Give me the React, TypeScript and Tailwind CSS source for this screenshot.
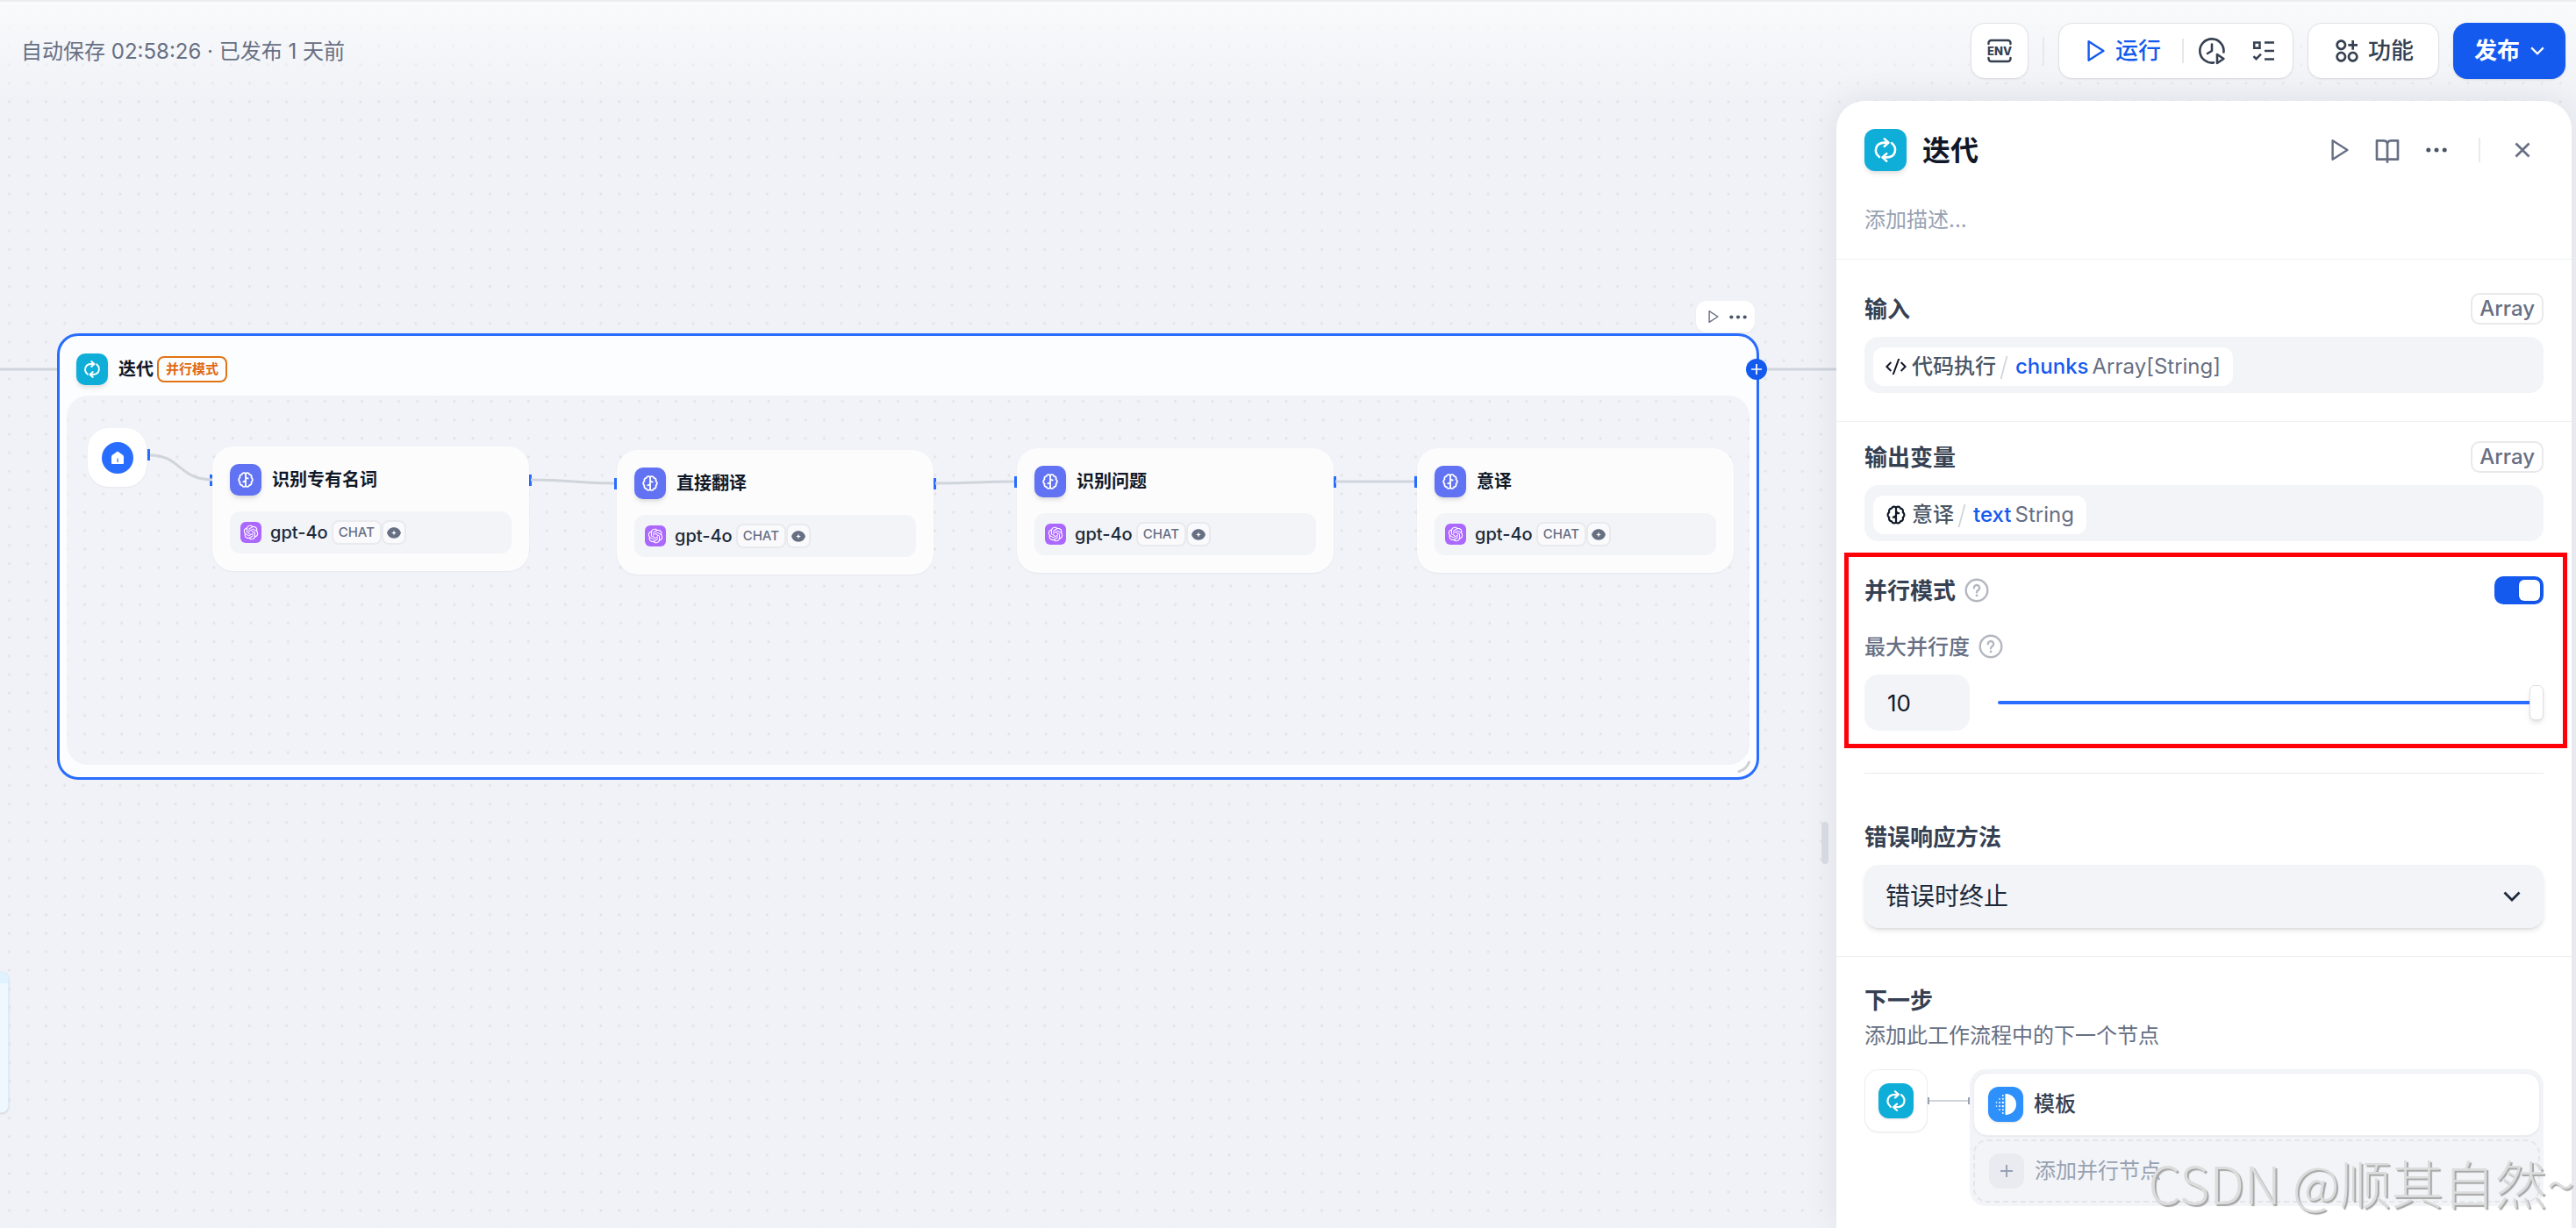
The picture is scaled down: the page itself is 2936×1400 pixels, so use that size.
import { useState } from 'react';
import type { ReactNode } from 'react';
import { RiApps2AddLine, RiBookOpenLine, RiCloseLine, RiCodeSSlashLine, RiOpenaiFill } from 'react-icons/ri';

interface IconProps {
  className?: string;
}

interface LlmNodeData {
  title: string;
  x: number;
  y: number;
}

const llmNodes: LlmNodeData[] = [
  { title: '识别专有名词', x: 242, y: 509 },
  { title: '直接翻译', x: 703, y: 513 },
  { title: '识别问题', x: 1159, y: 511 },
  { title: '意译', x: 1615, y: 511 },
];

const NODE_WIDTH = 361;
const HANDLE_Y = 38;

const PlayIcon = ({ className }: IconProps) => (
  <svg viewBox="0 0 20 24" fill="none" stroke="currentColor" strokeWidth="2.4" className={className}>
    <path d="M1.6 1.2 18.4 12 1.6 22.8Z" strokeLinejoin="round" />
  </svg>
);

const MoreIcon = ({ className }: IconProps) => (
  <svg viewBox="0 0 24 6" fill="currentColor" className={className}>
    <circle cx="2.8" cy="3" r="2.5" />
    <circle cx="12" cy="3" r="2.5" />
    <circle cx="21.2" cy="3" r="2.5" />
  </svg>
);

const ChevronIcon = ({ className }: IconProps) => (
  <svg viewBox="0 0 20 12" fill="none" stroke="currentColor" strokeWidth="2.8" className={className}>
    <path d="m1.5 1.5 8.5 8.5 8.5-8.5" />
  </svg>
);

const PlusIcon = ({ className }: IconProps) => (
  <svg viewBox="0 0 14 14" fill="none" stroke="currentColor" strokeWidth="2" className={className}>
    <path d="M7 0v14M0 7h14" />
  </svg>
);

const LoopIcon = ({ className }: IconProps) => (
  <svg viewBox="0 0 24 24" fill="none" stroke="currentColor" strokeWidth="2.2" strokeLinecap="round" strokeLinejoin="round" className={className}>
    <path d="M6 18.8C.2 14.2 1.6 5 10.800 4.800h3.700" />
    <path d="m11 1.200 4 3.600-4 3.600" />
    <path d="M18 5.200C23.800 9.800 22.400 19 13.200 19.200H9.500" />
    <path d="m13 22.800-4-3.600 4-3.600" />
  </svg>
);

const BrainIcon = ({ className }: IconProps) => (
  <svg viewBox="0 0 24 24" fill="none" stroke="currentColor" strokeWidth="2.2" strokeLinecap="round" strokeLinejoin="round" className={className}>
    <path d="M12 3.6C10.6 1.8 7.6 2.4 7 4.6 4.7 4.8 3.4 7 4.2 9 2 10.4 2 13.6 4.2 15c-.8 2 .5 4.2 2.8 4.4.6 2.2 3.6 2.8 5 1" />
    <path d="M12 3.6c1.4-1.8 4.4-1.2 5 1 2.3.2 3.6 2.4 2.8 4.4 2.2 1.4 2.2 4.6 0 6 .8 2-.5 4.2-2.8 4.4-.6 2.2-3.6 2.8-5 1" />
    <path d="M12 3.6v16.8M12 7.5c.2 1.7 1.4 2.7 3.2 2.7M12 12c-.2 1.7-1.4 2.7-3.2 2.7" />
  </svg>
);

const HistoryIcon = ({ className }: IconProps) => (
  <svg viewBox="0 0 32 32" fill="none" stroke="currentColor" strokeWidth="2.6" strokeLinecap="round" strokeLinejoin="round" className={className}>
    <path d="M18 29.4A13.6 13.6 0 1 1 29.4 17.5" />
    <path d="M16 8.5v7.5l-5 3" />
    <path d="M22 20v10l7.4-5Z" />
  </svg>
);

const ChecklistIcon = ({ className }: IconProps) => (
  <svg viewBox="0 0 26 24" fill="none" stroke="currentColor" strokeWidth="2.5" className={className}>
    <path d="M2.2 2.500h6.300v6.300H2.200Z" />
    <path d="m1.500 18.200 3 3 5.500-5.500M14 2.500h11M14 12h11M14 21.500h11" />
  </svg>
);

const EnvIcon = ({ className }: IconProps) => (
  <svg viewBox="0 0 30 28" fill="none" stroke="currentColor" strokeWidth="2.4" strokeLinecap="round" className={className}>
    <path d="M2.500 6V5a3 3 0 0 1 3-3h19a3 3 0 0 1 3 3v1M2.500 22v1a3 3 0 0 0 3 3h19a3 3 0 0 0 3-3v-1" />
    <text x="15" y="18.8" textAnchor="middle" fill="currentColor" stroke="none" fontSize="13" fontWeight="800">
      ENV
    </text>
  </svg>
);

const HomeIcon = ({ className }: IconProps) => (
  <svg viewBox="0 0 14 15" className={className}>
    <path d="M7 .5 13 4.8q1 .8 1 2V14a1 1 0 0 1-1 1H1a1 1 0 0 1-1-1V6.8q0-1.2 1-2Z" fill="white" />
    <path d="M6.500 8.500h1.200V13H6.500Z" fill="#296dff" />
  </svg>
);

const EyeIcon = ({ className }: IconProps) => (
  <svg viewBox="0 0 16 13" className={className}>
    <path d="M8 .3c4 0 7 2.700 7.900 6.200C15 10 12 12.700 8 12.700S1 10 .1 6.500C1 3 4 .3 8 .3Z" fill="#676f83" />
    <path d="m8 3.600.8 2.100 2.200.8-2.200.8L8 9.400l-.8-2.100L5 6.500l2.200-.8Z" fill="white" />
  </svg>
);

const TemplateIcon = ({ className }: IconProps) => (
  <svg viewBox="0 0 24 24" fill="white" className={className}>
    <path d="M11.500 0C18.500 0 24 5 24 12s-5.500 12-12.500 12Z" />
    <circle cx="8.8" cy="2" r=".9" />
    <circle cx="8.8" cy="5.8" r="1" />
    <circle cx="8.8" cy="9.9" r="1.2" />
    <circle cx="8.8" cy="14.1" r="1.2" />
    <circle cx="8.8" cy="18.2" r="1" />
    <circle cx="8.8" cy="22" r=".9" />
    <circle cx="5" cy="5.8" r=".9" />
    <circle cx="5" cy="9.9" r="1" />
    <circle cx="5" cy="14.1" r="1" />
    <circle cx="5" cy="18.2" r=".9" />
    <circle cx="1.5" cy="9.9" r=".8" />
    <circle cx="1.5" cy="14.1" r=".8" />
  </svg>
);

const HelpIcon = () => (
  <svg viewBox="0 0 28 28" fill="none" stroke="currentColor" strokeWidth="2.4" strokeLinecap="round" className="size-7 text-[#b5b7c0]">
    <circle cx="14" cy="14" r="12.3" />
    <path d="M10.800 11.200a3.200 3.200 0 1 1 5 2.600c-1.200.8-1.800 1.300-1.800 2.400" />
    <path d="M14 19.800v.1" strokeWidth="2.8" />
  </svg>
);

interface DotGridProps {
  id: string;
  x: number;
  y: number;
}

const DotGrid = ({ id, x, y }: DotGridProps) => (
  <svg className="absolute inset-0 size-full" aria-hidden="true">
    <defs>
      <pattern id={id} x={x} y={y} width="21.07" height="21.07" patternUnits="userSpaceOnUse">
        <circle cx="10.5" cy="10.5" r="1.6" fill="#e2e3e7" />
      </pattern>
    </defs>
    <rect width="100%" height="100%" fill={`url(#${id})`} />
  </svg>
);

const LlmNode = ({ title, x, y }: LlmNodeData) => (
  <div
    className="absolute flex w-[361px] flex-col rounded-3xl bg-[#fcfcfd] p-5 shadow-xs"
    style={{ left: x, top: y }}
  >
    <div className="flex items-center gap-3">
      <div className="flex size-9 items-center justify-center rounded-[10px] bg-[#6172f3] text-white shadow-md">
        <BrainIcon className="size-5" />
      </div>
      <span className="text-[20px] leading-7 font-semibold text-[#101828]">{title}</span>
    </div>
    <div className="mt-[18px] flex h-12 items-center rounded-xl bg-[#f2f4f7] px-3">
      <div className="flex size-6 items-center justify-center rounded-md bg-[#ab68ff] text-white">
        <RiOpenaiFill className="size-5" />
      </div>
      <span className="ml-2.5 text-[20px] leading-7 font-medium text-[#1d2939]">gpt-4o</span>
      <span className="ml-1 rounded-lg border-2 border-[#e9eaed] bg-[#fafafc] px-1.5 text-[15px] leading-6 font-medium text-[#676f83]">
        CHAT
      </span>
      <span className="flex h-7 w-7 items-center justify-center rounded-lg border-2 border-[#e9eaed] bg-[#fafafc]">
        <EyeIcon className="h-[13px] w-4" />
      </span>
    </div>
  </div>
);

const Handle = ({ x, y }: { x: number; y: number }) => (
  <rect x={x} y={y - 6} width="3" height="13" fill="#296dff" />
);

const Edges = () => (
  <svg className="absolute inset-0 size-full" fill="none" aria-hidden="true">
    <Handle x={168} y={518} />
    {llmNodes.map(({ title, x, y }, i) => (
      <g key={title}>
        <Handle x={x - 3} y={y + HANDLE_Y} />
        {i < llmNodes.length - 1 && <Handle x={x + NODE_WIDTH} y={y + HANDLE_Y} />}
      </g>
    ))}
    <g stroke="#d0d5dc" strokeWidth="3">
      <path d="M0 421h65M2005 421h200" />
      <path d="M171 519C206 519 204 547 242 547" />
      {llmNodes.slice(1).map(({ title, x, y }, i) => {
        const prev = llmNodes[i];
        const startX = prev.x + NODE_WIDTH + 2;
        const startY = prev.y + HANDLE_Y;
        const endY = y + HANDLE_Y;
        const midX = (startX + x) / 2;
        return <path key={title} d={`M${startX} ${startY}C${midX} ${startY} ${midX} ${endY} ${x - 3} ${endY}`} />;
      })}
    </g>
  </svg>
);

const IterationNode = () => (
  <div className="absolute top-[380px] left-[65px] flex h-[509px] w-[1940px] flex-col rounded-3xl border-3 border-[#296dff] bg-[#fcfdff]">
    <div className="flex h-17 items-center px-[19px] pt-2">
      <div className="flex size-9 items-center justify-center rounded-[10px] bg-[#0eaed8] text-white shadow-md">
        <LoopIcon className="size-5" />
      </div>
      <span className="ml-3 text-[20px] leading-7 font-semibold text-[#101828]">迭代</span>
      <span className="ml-1 rounded-lg border-2 border-[#e27314] px-2 text-[15px] leading-[26px] font-semibold text-[#e0690f]">
        并行模式
      </span>
    </div>
    <div className="relative mx-2 mb-3.5 flex-1 overflow-hidden rounded-3xl bg-[#f1f3f8]">
      <DotGrid id="dots-inner" x={10} y={-4} />
    </div>
    <svg viewBox="0 0 16 16" className="absolute right-1.5 bottom-1 size-4" fill="none">
      <path d="M2 13.500C7 12 11.500 8.500 13.500 3" stroke="#cfd0d3" strokeWidth="3" strokeLinecap="round" />
    </svg>
  </div>
);

const Canvas = () => (
  <div className="absolute inset-0 overflow-hidden bg-[#f0f2f7]">
    <DotGrid id="dots-outer" x={0} y={0} />
    <div className="absolute top-[1108px] -left-10 h-[161px] w-[50px] overflow-hidden rounded-lg border border-[#dcebf9] bg-[#eff8ff] shadow-sm">
      <div className="h-3 bg-[#dff2ff]"></div>
    </div>
    <IterationNode />
    <Edges />
    <div className="absolute top-[488px] left-[100px] flex size-[67px] items-center justify-center rounded-3xl bg-white shadow-xs">
      <div className="flex size-9 items-center justify-center rounded-full bg-[#296dff]">
        <HomeIcon className="h-[15px] w-3.5" />
      </div>
    </div>
    {llmNodes.map((node) => (
      <LlmNode key={node.title} {...node} />
    ))}
    <div className="absolute top-[343px] left-[1933px] flex h-9 w-[67px] items-center justify-between rounded-xl bg-white pr-[9px] pl-3.5 text-[#676f83] shadow-xs">
      <button aria-label="Run node">
        <PlayIcon className="h-3.5 w-3" />
      </button>
      <button aria-label="More" className="text-[#495464]">
        <MoreIcon className="h-[5px] w-5" />
      </button>
    </div>
    <button
      aria-label="Add node"
      className="absolute top-[409px] left-[1990px] flex size-6 items-center justify-center rounded-full bg-[#155aef] text-white"
    >
      <PlusIcon className="size-3" />
    </button>
  </div>
);

const Header = () => (
  <header className="relative flex items-center justify-between border-t-2 border-[#ededf0] bg-linear-to-b from-[#f9fafb] to-[#f0f2f7]/0 pt-6 pr-3 pb-[25px] pl-6">
    <span className="pt-0.5 text-[24px] leading-8 text-[#676f83]">自动保存 02:58:26 · 已发布 1 天前</span>
    <div className="flex items-center gap-4 text-[26px] leading-9 text-[#354052]">
      <button
        aria-label="Environment variables"
        className="flex h-16 w-[66px] items-center justify-center rounded-2xl border border-[#e0e1e4] bg-white shadow-xs"
      >
        <EnvIcon className="h-7 w-[30px]" />
      </button>
      <div className="h-8 w-0.5 bg-[#e7e8ec]"></div>
      <div className="flex h-16 items-center rounded-2xl border border-[#e0e1e4] bg-white pr-5 pl-8 shadow-xs">
        <button className="flex items-center gap-3 font-medium text-[#155aef]">
          <PlayIcon className="h-6 w-5" />
          运行
        </button>
        <div className="ml-6 h-7 w-0.5 bg-[#e7e8ec]"></div>
        <button aria-label="Run history" className="ml-4">
          <HistoryIcon className="size-8" />
        </button>
        <button aria-label="Checklist" className="ml-[30px]">
          <ChecklistIcon className="h-6 w-[26px]" />
        </button>
      </div>
      <button className="flex h-16 items-center gap-2 rounded-2xl border border-[#e0e1e4] bg-white px-7 font-medium shadow-xs">
        <RiApps2AddLine className="size-8" />
        功能
      </button>
      <button className="flex h-16 items-center gap-3 rounded-2xl bg-[#155aef] px-6 font-semibold text-white shadow-sm">
        发布
        <ChevronIcon className="h-2.5 w-4" />
      </button>
    </div>
  </header>
);

interface VariableFieldProps {
  label: string;
  icon: ReactNode;
  node: string;
  name: string;
  type: string;
}

const VariableField = ({ label, icon, node, name, type }: VariableFieldProps) => (
  <div>
    <div className="flex h-9 items-center justify-between">
      <h3 className="pt-0.5 text-[26px] leading-9 font-semibold text-[#354052]">{label}</h3>
      <span className="rounded-[10px] border-2 border-[#e9e9ec] px-2 text-[24px] leading-8 font-medium text-[#676f83]">
        Array
      </span>
    </div>
    <button className="mt-3.5 flex h-16 w-full items-center rounded-2xl bg-[#f2f4f7] px-2.5 pt-1">
      <span className="flex h-11 items-center rounded-xl bg-white px-3.5 text-[24px] leading-8 font-medium text-[#495464]">
        <span className="text-[#101828]">{icon}</span>
        <span className="ml-1.5">{node}</span>
        <svg viewBox="0 0 10 32" className="ml-1 h-8 w-2.5" fill="none" stroke="#d0d5dc" strokeWidth="1.8">
          <path d="M1.500 30 8.500 4" />
        </svg>
        <span className="ml-2 text-[#155aef]">{name}</span>
        <span className="ml-1 font-normal text-[#676f83]">{type}</span>
      </span>
    </button>
  </div>
);

const ParallelSettings = () => {
  const [enabled, setEnabled] = useState(true);
  const [degree, setDegree] = useState(10);

  return (
    <div className="mt-[13px] mr-[5px] ml-[9px] border-5 border-[#ff0008] pt-[22px] pr-[22px] pb-[15px] pl-[18px]">
      <div className="flex h-8 items-center justify-between">
        <div className="flex items-center gap-2.5">
          <label htmlFor="parallel" className="pt-0.5 text-[26px] leading-8 font-semibold text-[#354052]">
            并行模式
          </label>
          <HelpIcon />
        </div>
        <input
          id="parallel"
          type="checkbox"
          role="switch"
          checked={enabled}
          onChange={(e) => setEnabled(e.target.checked)}
          className="flex h-8 w-14 appearance-none items-center rounded-[10px] bg-gray-300 px-1 before:h-6 before:w-6 before:rounded-md before:bg-white before:shadow-sm checked:justify-end checked:bg-[#155aef]"
        />
      </div>
      <div className="mt-[34px] flex h-7 items-center gap-2.5">
        <label htmlFor="degree" className="pt-0.5 text-[24px] leading-7 font-medium text-[#676f83]">
          最大并行度
        </label>
        <HelpIcon />
      </div>
      <div className="mt-[18px] flex items-center gap-8">
        <input
          id="degree"
          type="text"
          value={degree}
          onChange={(e) => setDegree(Number(e.target.value) || 1)}
          className="h-16 w-30 rounded-2xl bg-[#f2f4f7] px-[26px] text-[26px] text-[#101828]"
        />
        <input
          type="range"
          min={1}
          max={10}
          value={degree}
          aria-label="最大并行度"
          onChange={(e) => setDegree(Number(e.target.value))}
          className="h-10 min-w-0 flex-1 appearance-none bg-transparent [&::-webkit-slider-runnable-track]:h-1 [&::-webkit-slider-runnable-track]:rounded-full [&::-webkit-slider-runnable-track]:bg-[#296dff] [&::-webkit-slider-thumb]:-mt-[18px] [&::-webkit-slider-thumb]:h-10 [&::-webkit-slider-thumb]:w-4 [&::-webkit-slider-thumb]:appearance-none [&::-webkit-slider-thumb]:rounded-md [&::-webkit-slider-thumb]:border [&::-webkit-slider-thumb]:border-solid [&::-webkit-slider-thumb]:border-[#dfe1e6] [&::-webkit-slider-thumb]:bg-white [&::-webkit-slider-thumb]:shadow-md"
        />
      </div>
    </div>
  );
};

const NextStep = () => (
  <div className="px-8 pt-8">
    <h3 className="text-[26px] leading-9 font-semibold text-[#354052]">下一步</h3>
    <p className="mt-1 text-[24px] leading-9 text-[#676f83]">添加此工作流程中的下一个节点</p>
    <div className="mt-5 flex items-start">
      <div className="flex size-18 items-center justify-center rounded-2xl border border-[#eceef2] bg-white shadow-xs">
        <div className="flex size-10 items-center justify-center rounded-xl bg-[#0eaed8] text-white shadow-sm">
          <LoopIcon className="size-6" />
        </div>
      </div>
      <svg viewBox="0 0 48 72" className="h-18 w-12" fill="none" strokeWidth="2">
        <path d="M2 36h44" stroke="#d0d5dc" />
        <path d="M1 32v8M47 32v8" stroke="#98a2b2" />
      </svg>
      <div className="flex flex-1 flex-col gap-1 rounded-[18px] bg-[#f2f4f7] p-1">
        <button className="flex h-18 items-center gap-3 rounded-2xl border border-[#eceef2] bg-white px-4 text-[24px] font-medium text-[#354052] shadow-xs">
          <span className="flex size-10 items-center justify-center rounded-xl bg-[#2e90fa] shadow-sm">
            <TemplateIcon className="size-6" />
          </span>
          模板
        </button>
        <button className="flex h-18 items-center gap-3 rounded-2xl border-2 border-dashed border-[#e3e5e9] px-4 text-[24px] text-[#98a2b2]">
          <span className="flex size-10 items-center justify-center rounded-xl bg-[#e9ebf0]">
            <PlusIcon className="size-3.5" />
          </span>
          添加并行节点
        </button>
      </div>
    </div>
  </div>
);

const Panel = () => (
  <aside className="w-[838px] rounded-t-[32px] bg-white shadow-[0_0_40px_rgba(16,24,40,0.08)]">
    <div className="border-b border-[#eeeff2] px-8 pt-8 pb-[26px]">
      <div className="flex h-12 items-center">
        <div className="flex size-12 items-center justify-center rounded-xl bg-[#0eaed8] text-white shadow-md">
          <LoopIcon className="size-7" />
        </div>
        <h2 className="ml-[18px] flex-1 pt-0.5 text-[32px] leading-10 font-semibold text-[#101828]">迭代</h2>
        <div className="flex items-center text-[#676f83]">
          <button aria-label="Run this step">
            <PlayIcon className="h-6 w-5" />
          </button>
          <button aria-label="Help" className="ml-7">
            <RiBookOpenLine className="size-8" />
          </button>
          <button aria-label="More" className="ml-7 text-[#495464]">
            <MoreIcon className="h-1.5 w-6" />
          </button>
          <div className="ml-9 h-7 w-0.5 bg-[#e9eaed]"></div>
          <button aria-label="Close" className="ml-8 pr-2">
            <RiCloseLine className="size-8" />
          </button>
        </div>
      </div>
      <p className="mt-[38px] text-[24px] leading-9 text-[#98a2b2]">添加描述...</p>
    </div>
    <div className="border-b border-[#eeeff2] px-8 pt-[38px] pb-8">
      <VariableField
        label="输入"
        icon={<RiCodeSSlashLine className="size-6" />}
        node="代码执行"
        name="chunks"
        type="Array[String]"
      />
    </div>
    <div className="px-8 pt-[22px]">
      <VariableField label="输出变量" icon={<BrainIcon className="size-6" />} node="意译" name="text" type="String" />
    </div>
    <ParallelSettings />
    <hr className="mx-8 mt-7 border-[#e9eaed]" />
    <div className="border-b border-[#eeeff2] px-8 pt-[55px] pb-8">
      <label htmlFor="on-error" className="block text-[26px] leading-9 font-semibold text-[#354052]">
        错误响应方法
      </label>
      <div className="relative mt-[13px]">
        <select
          id="on-error"
          className="block h-18 w-full appearance-none rounded-2xl bg-[#f2f4f7] px-6 text-[28px] text-[#1d2939] shadow-md"
        >
          <option>错误时终止</option>
        </select>
        <ChevronIcon className="pointer-events-none absolute top-[30px] right-[26px] h-3 w-5 text-[#1d2939]" />
      </div>
    </div>
    <NextStep />
  </aside>
);

export default function App() {
  return (
    <div className="relative flex min-h-screen flex-col overflow-hidden font-[Inter,'Noto_Sans_CJK_SC',sans-serif]">
      <Canvas />
      <Header />
      <main className="relative flex flex-1 items-stretch justify-end gap-[9px] pr-[5px]">
        <div className="mt-[822px] h-12 w-2 rounded-full bg-[#dadee4]"></div>
        <Panel />
      </main>
      <div className="pointer-events-none absolute right-0.5 bottom-3 font-['Noto_Sans_CJK_SC',sans-serif] text-[59px] leading-20 font-light text-[#dcdcdc] [text-shadow:2px_2px_1px_#a6a6a6]">
        CSDN @顺其自然~
      </div>
    </div>
  );
}
